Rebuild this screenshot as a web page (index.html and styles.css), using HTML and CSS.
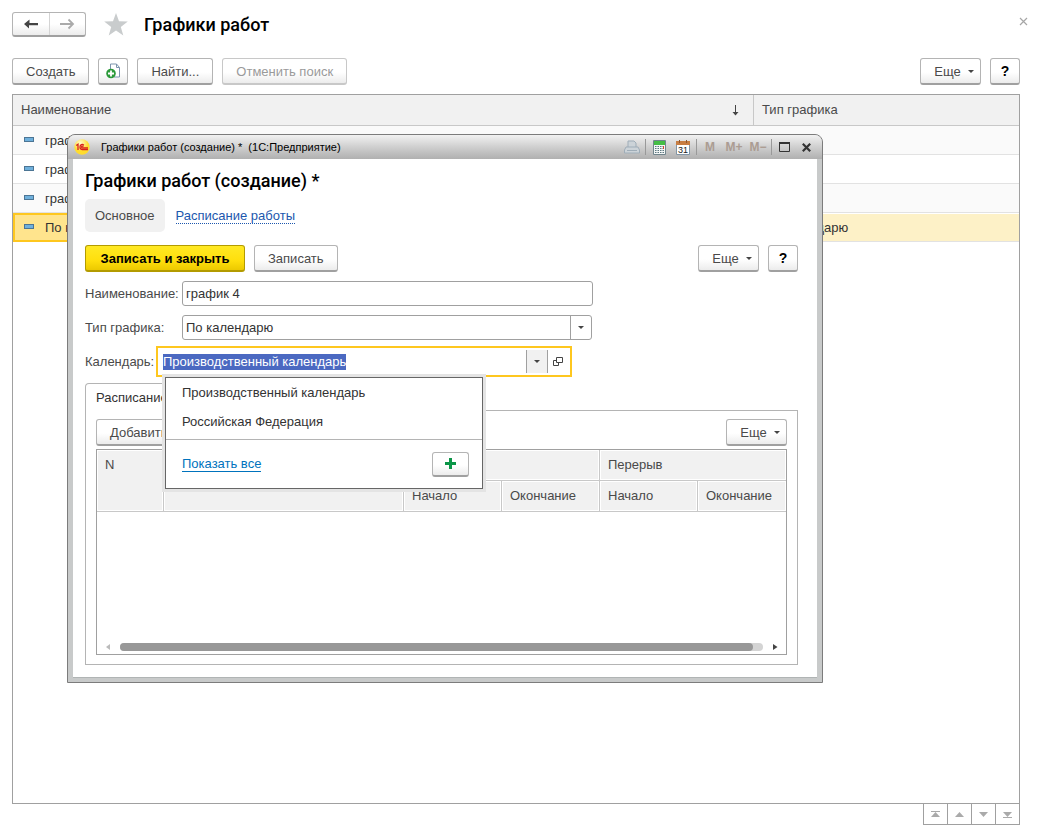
FILE: index.html
```html
<!DOCTYPE html>
<html lang="ru">
<head>
<meta charset="utf-8">
<title>Графики работ</title>
<link rel="stylesheet" href="styles.css">
</head>
<body>
<main class="page">
  <header class="page-head">
    <div class="nav">
      <button class="nav-btn" aria-label="Назад"><svg width="16" height="12" viewBox="0 0 16 12"><path d="M1 6l5.500-4.500V5H15v2.200H6v3.300z" fill="#444"/></svg></button>
      <button class="nav-btn" aria-label="Вперед"><svg width="16" height="12" viewBox="0 0 16 12"><path d="M1 6h13M9.500 1.500L14 6l-4.500 4.500" fill="none" stroke="#aaa" stroke-width="1.800"/></svg></button>
    </div>
    <svg class="star" width="24" height="23" viewBox="0 0 24 23"><path d="M12 0l3 8.300 8.800.3-7 5.400 2.500 8.500L12 17.500l-7.300 5 2.500-8.500-7-5.400 8.800-.3z" fill="#c9cccd"/></svg>
    <h1 class="title">Графики работ</h1>
    <button class="close" aria-label="Закрыть"><svg width="9" height="9" viewBox="0 0 9 9"><path d="M1 1l7 7M8 1L1 8" stroke="#a6a6a6" stroke-width="1.200"/></svg></button>
  </header>

  <div class="toolbar">
    <button class="btn">Создать</button>
    <button class="btn btn-icon" aria-label="Создать копированием"><svg width="15" height="16" viewBox="0 0 15 16"><path d="M4.500 7V1h6l3 3.500V14H8" fill="#fff" stroke="#7d94ad"/><path d="M10.500 1v3.500h3" fill="none" stroke="#7d94ad"/><circle cx="5" cy="10.500" r="4.800" fill="#2c9a3a"/><path d="M5 7.500v6M2 10.500h6" stroke="#fff" stroke-width="1.800"/></svg></button>
    <button class="btn">Найти...</button>
    <button class="btn" disabled>Отменить поиск</button>
    <span class="spacer"></span>
    <button class="btn btn-more">Еще<i class="caret"></i></button>
    <button class="btn btn-help">?</button>
  </div>

  <div class="list">
    <table class="grid">
      <colgroup><col><col class="col-type"></colgroup>
      <thead>
        <tr>
          <th><span class="th-line">Наименование<svg class="sort" width="7" height="11" viewBox="0 0 7 11"><path d="M3.500 0v9" stroke="#444"/><path d="M.5 7h6l-3 3.500z" fill="#444"/></svg></span></th>
          <th>Тип графика</th>
        </tr>
      </thead>
      <tbody>
        <tr><td><i class="mark"></i>график 1</td><td></td></tr>
        <tr><td><i class="mark"></i>график 2</td><td></td></tr>
        <tr><td><i class="mark"></i>график 3</td><td></td></tr>
        <tr class="selected"><td><i class="mark"></i>По календарю</td><td>По календарю</td></tr>
      </tbody>
    </table>
  </div>
  <div class="pager">
    <button aria-label="В начало"><svg width="11" height="7" viewBox="0 0 11 7"><path d="M1 .5h9" stroke="#aaa"/><path d="M5.500 1L10 6H1z" fill="#aaa"/></svg></button>
    <button aria-label="Вверх"><svg width="11" height="7" viewBox="0 0 11 7"><path d="M5.500 1L10 6H1z" fill="#aaa"/></svg></button>
    <button aria-label="Вниз"><svg width="11" height="7" viewBox="0 0 11 7"><path d="M5.500 6L10 1H1z" fill="#aaa"/></svg></button>
    <button aria-label="В конец"><svg width="11" height="7" viewBox="0 0 11 7"><path d="M1 6.500h9" stroke="#aaa"/><path d="M5.500 6L10 1H1z" fill="#aaa"/></svg></button>
  </div>
</main>

<section class="window" role="dialog" aria-label="Графики работ (создание)">
  <div class="window-bar">
    <svg class="logo" width="16" height="16" viewBox="0 0 16 16"><defs><radialGradient id="sun" cx=".4" cy=".25"><stop offset="0" stop-color="#fffbd0"/><stop offset="1" stop-color="#ffdc2e"/></radialGradient></defs><circle cx="8" cy="8" r="7.700" fill="url(#sun)"/><path d="M2.200 6.500L4 5.200V11M9.800 6.200C8.500 4.800 6 5.500 6 8c0 2 1.200 2.500 2.500 2.500H14M9.500 7.600C8.500 6.700 7.600 7.300 7.600 8c0 .7.500.9 1 .9H14" fill="none" stroke="#d8201c" stroke-width="1.300"/></svg>
    <span class="window-title">Графики работ (создание) *&nbsp; (1С:Предприятие)</span>
    <div class="tools">
      <button class="tool" aria-label="Печать"><svg width="16" height="14" viewBox="0 0 16 14"><path d="M4 7V1h6l2 2v4M2 7h12l1.500 3v3H.5v-3zM3 10.500h10" fill="#ccd3d8" stroke="#9fadb8"/></svg></button>
      <i class="sep"></i>
      <button class="tool" aria-label="Калькулятор"><svg width="13" height="15" viewBox="0 0 13 15"><path d="M.5.5h12v14H.5z" fill="#f4f6f6" stroke="#71858c"/><path d="M1 1h11v4H1z" fill="#44bd45"/><path d="M2 6.500h9M2 8.500h9M2 10.500h9M2 12.500h9" stroke="#5d7880" stroke-dasharray="1.500 1"/><path d="M10.500 6v3" stroke="#d5432f"/></svg></button>
      <button class="tool" aria-label="Календарь"><svg width="14" height="15" viewBox="0 0 14 15"><path d="M.5 1.500h13v13H.5z" fill="#fff" stroke="#8295a5"/><path d="M0 1h14v4H0z" fill="#c77d42"/><path d="M3.500 0v3M10.500 0v3" stroke="#8b5731"/><text x="7" y="13" class="cal-text" text-anchor="middle">31</text></svg></button>
      <i class="sep"></i>
      <button class="tool tool-m">M</button>
      <button class="tool tool-m">M+</button>
      <button class="tool tool-m">M−</button>
      <i class="sep"></i>
      <button class="tool tool-win" aria-label="Развернуть"><svg width="11" height="10" viewBox="0 0 11 10"><path d="M.5 1v8.500h10V1" fill="none" stroke="#333"/><path d="M0 1h11" stroke="#333" stroke-width="2"/></svg></button>
      <button class="tool tool-win" aria-label="Закрыть окно"><svg width="9" height="9" viewBox="0 0 9 9"><path d="M.8.8l7.400 7.400M8.200.8L.8 8.200" stroke="#333" stroke-width="2.200"/></svg></button>
    </div>
  </div>

  <div class="window-body">
    <h2 class="title">Графики работ (создание) *</h2>
    <nav class="sections">
      <span class="section-current">Основное</span>
      <a class="section-link" href="#schedule">Расписание работы</a>
    </nav>
    <div class="toolbar">
      <button class="btn btn-primary">Записать и закрыть</button>
      <button class="btn">Записать</button>
      <span class="spacer"></span>
      <button class="btn btn-more">Еще<i class="caret"></i></button>
      <button class="btn btn-help">?</button>
    </div>

    <div class="field">
      <label for="name">Наименование:</label>
      <input class="box" id="name" type="text" value="график 4">
    </div>
    <div class="field">
      <label for="type">Тип графика:</label>
      <div class="box box-select">
        <select id="type"><option>По календарю</option></select>
        <span class="drop"><i class="caret"></i></span>
      </div>
    </div>
    <div class="field field-active">
      <label for="calendar">Календарь:</label>
      <div class="combo">
        <input id="calendar" type="text" value="Производственный календарь">
        <button class="combo-drop" aria-label="Выбрать"><i class="caret"></i></button>
        <button class="combo-open" aria-label="Открыть"><svg width="10" height="10" viewBox="0 0 10 10"><path d="M3.500.5h6v5h-6zM3 3.500H.5v5h5V6" fill="none" stroke="#444"/></svg></button>
        <div class="popup">
          <ul class="options">
            <li>Производственный календарь</li>
            <li>Российская Федерация</li>
          </ul>
          <div class="popup-foot">
            <a href="#all">Показать все</a>
            <button class="btn btn-add" aria-label="Создать"><svg width="11" height="11" viewBox="0 0 11 11"><path d="M5.500 0v11M0 5.500h11" stroke="#0b9547" stroke-width="3"/></svg></button>
          </div>
        </div>
      </div>
    </div>

    <div class="tabs" id="schedule">
      <div class="tab-row"><button class="tab">Расписание работы</button></div>
      <div class="pane">
        <div class="toolbar">
          <button class="btn">Добавить</button>
          <span class="spacer"></span>
          <button class="btn btn-more">Еще<i class="caret"></i></button>
        </div>
        <div class="sheet">
          <table class="grid hours">
            <colgroup><col class="c-num"><col class="c-day"><col class="c-time"><col class="c-time"><col class="c-time"><col></colgroup>
            <thead>
              <tr><th rowspan="2">N</th><th rowspan="2"></th><th colspan="2"></th><th colspan="2">Перерыв</th></tr>
              <tr><th>Начало</th><th>Окончание</th><th>Начало</th><th>Окончание</th></tr>
            </thead>
          </table>
          <div class="scroll">
            <svg width="4" height="8" viewBox="0 0 4 8"><path d="M4 1v6L0 4z" fill="#bbb"/></svg>
            <div class="track"><div class="thumb"></div></div>
            <svg width="5" height="8" viewBox="0 0 5 8"><path d="M0 1v6l4.500-3z" fill="#444"/></svg>
          </div>
        </div>
      </div>
    </div>
  </div>
</section>
<script src="app.js"></script>
</body>
</html>
```
FILE: styles.css
```css
* { box-sizing: border-box; }
body {
  margin: 0;
  background: #fff;
  color: #333;
  font: 13px/16px "Liberation Sans", Arial, sans-serif;
}
button, input, select { font: inherit; color: inherit; margin: 0; }
button { cursor: pointer; padding: 0; border: 0; background: none; }
h1, h2, ul { margin: 0; padding: 0; }
svg { display: block; flex: none; }

.page {
  display: flex;
  flex-direction: column;
  min-height: 100vh;
  padding: 12px 19px 12px 12px;
}
.title {
  color: #000;
  font: 500 18px/26px Roboto, "Liberation Sans", sans-serif;
}
.page-head { display: flex; align-items: center; height: 25px; margin-bottom: 21px; }
.nav {
  display: flex;
  width: 74px;
  height: 25px;
  border: 1px solid #b4b4b4;
  border-bottom: 2px solid #a0a0a0;
  border-radius: 3px;
  background: linear-gradient(#fff 50%, #ececec);
}
.nav-btn { flex: 1; display: flex; align-items: center; justify-content: center; }
.nav-btn + .nav-btn { border-left: 1px solid #d4d4d4; }
.star { margin: 0 16px 0 18px; }
.close { margin-left: auto; align-self: flex-start; padding: 5px 0; margin-right: -8px; }

.toolbar { display: flex; gap: 9px; height: 27px; }
.spacer { flex: 1; }
.btn {
  display: flex;
  align-items: center;
  justify-content: center;
  padding: 1px 13px 0;
  height: 27px;
  border: 1px solid #b4b4b4;
  border-bottom: 2px solid #a0a0a0;
  border-radius: 3px;
  background: linear-gradient(#fff 55%, #ececec);
  color: #4a4a4a;
  white-space: nowrap;
}
.btn:disabled { color: #9a9a9a; border-color: #c8c8c8; }
.btn-icon { width: 30px; padding: 0; }
.btn-more { width: 61px; gap: 7px; padding: 1px 6px 0 13px; }
.btn-help { width: 30px; padding: 0; color: #000; font-size: 14px; font-weight: bold; }
.btn-primary {
  min-width: 160px;
  border-color: #b39b00;
  background: linear-gradient(#ffe924, #ffdf0d 60%, #ecc900);
  color: #000;
  font-weight: bold;
}
.caret {
  border: 3px solid transparent;
  border-top-color: #444;
  border-bottom: 0;
}

.list { flex: 1; border: 1px solid #a0a0a0; }
.page > .toolbar { margin-bottom: 9px; }
.grid { width: 100%; border-collapse: separate; border-spacing: 0; table-layout: fixed; }
.grid th {
  height: 31px;
  padding: 0 8px;
  background: #f1f1f1;
  color: #4a4a4a;
  font-weight: normal;
  text-align: left;
}
.list th { border-bottom: 1px solid #c8c8c8; }
.list th + th { border-left: 1px solid #c8c8c8; }
.col-type { width: 266px; }
.th-line { display: flex; justify-content: space-between; align-items: center; padding-right: 6px; }
.grid td {
  height: 29px;
  padding: 2px 8px 0;
  border-bottom: 1px solid #e2e2e2;
  color: #333;
}
.grid td:first-child { padding-left: 11px; }
.grid tbody tr:nth-child(odd) td { background: #fafafa; }
.grid .selected td { padding-top: 0; background: #fdf1c7; border-top: 1px solid #fff; }
.grid .selected td:first-child { background: #ffe48d; box-shadow: inset 0 0 0 1px #fec71f; border: 1px solid #fec71f; border-right: 0; padding-left: 10px; }
.mark {
  display: inline-block;
  width: 10px;
  height: 5px;
  margin-right: 11px;
  border: 1px solid #4c7594;
  background: #6fb0dc;
  vertical-align: 3px;
}
.pager { display: flex; align-self: flex-end; }
.pager button {
  display: flex;
  align-items: center;
  justify-content: center;
  width: 24px;
  height: 21px;
  border: 1px solid #a0a0a0;
  border-width: 0 0 1px 1px;
}
.pager button:last-child { width: 25px; border-right-width: 1px; }

.window {
  position: absolute;
  left: 67px;
  top: 134px;
  width: 756px;
  padding: 0 5px 4px;
  border: 1px solid #7c7c7c;
  border-radius: 8px 8px 0 0;
  background: #c8caca;
}
.window-bar {
  display: flex;
  align-items: center;
  height: 24px;
  margin: 0 -5px;
  padding: 0 5px 0 6px;
  border-radius: 7px 7px 0 0;
  background: linear-gradient(#f2f2f2, #cfcfcf 50%, #b0b0b0);
}
.window-title { margin-left: 11px; color: #000; font-size: 11px; }
.tools { display: flex; align-items: center; margin-left: auto; }
.tool { display: flex; justify-content: center; width: 24px; }
.tool-m { color: #ab9c92; font-size: 12px; font-weight: bold; }
.tool-win { width: 22px; }
.cal-text { font-size: 9px; fill: #222; }
.sep { width: 1px; height: 16px; margin: 0 1px; background: #999; }

.window-body { padding: 9px 19px 12px 12px; border-bottom: 1px solid #b0b4b4; background: #fff; }
.sections { display: flex; align-items: center; gap: 11px; margin: 5px 0 13px; }
.section-current { padding: 9px 10px 8px; border-radius: 5px; background: #f1f1f1; color: #4a4a4a; }
.section-link { margin-top: 2px; color: #1c57ae; text-decoration: none; border-bottom: 1px dotted #1c57ae; line-height: 14px; }
.window-body > .toolbar { margin-bottom: 9px; }

.field { display: flex; align-items: center; height: 25px; margin-bottom: 9px; color: #4a4a4a; }
.field label { width: 97px; white-space: nowrap; }
.box {
  width: 411px;
  height: 25px;
  padding: 0 3px;
  border: 1px solid #a0a0a0;
  border-radius: 3px;
  background: #fff;
  color: #333;
  outline: 0;
}
.box-select { display: flex; padding: 0; width: 410px; }
.box-select select {
  flex: 1;
  padding: 0 3px;
  border: 0;
  outline: 0;
  appearance: none;
  background: none;
}
.drop { display: flex; align-items: center; justify-content: center; width: 21px; border-left: 1px solid #a0a0a0; }
.field-active label { width: 71px; }
.combo {
  position: relative;
  display: flex;
  align-items: center;
  width: 416px;
  height: 31px;
  padding: 2px;
  border: 2px solid #fec71f;
  background: #fff;
}
.combo input { flex: 1; padding: 0 3px; border: 0; outline: 0; color: #333; min-width: 0; }
.combo input::selection { background: #4b69c1; color: #fff; }
.combo button.combo-drop {
  display: flex;
  align-items: center;
  justify-content: center;
  width: 22px;
  height: 23px;
  border: 1px solid #a0a0a0;
  border-width: 0 1px;
  background: #f1f1f1;
}
.combo-open { display: flex; justify-content: center; width: 20px; }
.popup {
  position: absolute;
  z-index: 2;
  left: 7px;
  top: 29px;
  width: 318px;
  border: 1px solid #666;
  background: #fff;
  box-shadow: 0 0 0 3px #e4e4e4;
  color: #333;
}
.options { list-style: none; border-bottom: 1px solid #b4b4b4; }
.options li { padding: 7px 16px 6px; }
.options li + li { padding-bottom: 9px; }
.popup-foot { display: flex; align-items: center; justify-content: space-between; height: 48px; padding: 0 13px 0 16px; }
.popup-foot a { color: #0073bd; text-decoration: none; border-bottom: 1px solid #0073bd; line-height: 14px; }
.btn-add { width: 37px; height: 25px; padding: 0; }

.tab-row { display: flex; position: relative; }
.tab {
  height: 28px;
  padding: 0 10px;
  margin-bottom: -1px;
  border: 1px solid #b4b4b4;
  border-bottom: 0;
  border-radius: 4px 4px 0 0;
  background: #fff;
  color: #333;
}
.pane { padding: 8px 10px 9px; border: 1px solid #b4b4b4; }
.pane .toolbar { margin-bottom: 3px; }
.sheet { display: flex; flex-direction: column; min-height: 206px; border: 1px solid #a0a0a0; }
.c-num { width: 67px; }
.c-day { width: 240px; }
.c-time { width: 98px; }
.hours th { border: 1px solid #c8c8c8; border-width: 0 1px 1px 0; box-shadow: inset 0 0 0 1px #fff; }
.hours th:last-child { border-right: 0; }
.hours th[rowspan] { padding-top: 7px; vertical-align: top; }
.scroll { display: flex; align-items: center; gap: 10px; margin-top: auto; padding: 0 8px 3px 9px; }
.track { flex: 1; height: 8px; border-radius: 4px; background: #d4d4d4; }
.thumb { margin-right: 10px; height: 8px; border-radius: 4px; background: #989898; }
```
FILE: app.js
```js
const calendar = document.getElementById("calendar");
calendar.focus();
calendar.select();
```
